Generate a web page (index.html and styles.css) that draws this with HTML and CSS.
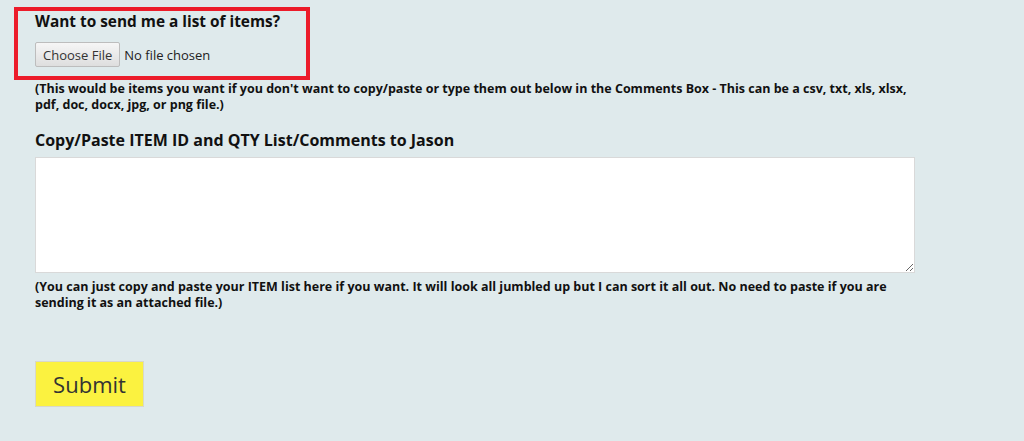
FILE: index.html
```html
<!DOCTYPE html>
<html lang="en">
<head>
<meta charset="utf-8">
<title>Send list</title>
<link rel="stylesheet" href="styles.css">
</head>
<body>
<form class="form">
  <div class="upload">
    <h3 class="label">Want to send me a list of items?</h3>
    <input class="file" type="file" name="list">
    <span class="highlight" aria-hidden="true"></span>
  </div>
  <p class="note">(This would be items you want if you don't want to copy/paste or type them out below in the Comments Box - This can be a csv, txt, xls, xlsx, pdf, doc, docx, jpg, or png file.)</p>
  <h3 class="label label-lg">Copy/Paste ITEM ID and QTY List/Comments to Jason</h3>
  <textarea class="comments" name="comments"></textarea>
  <p class="note">(You can just copy and paste your ITEM list here if you want. It will look all jumbled up but I can sort it all out. No need to paste if you are sending it as an attached file.)</p>
  <button class="submit" type="button">Submit</button>
</form>
</body>
</html>
```
FILE: styles.css
```css
html, body {
  margin: 0;
  padding: 0;
  background: #dfeaec;
}
body {
  font-family: "Open Sans", "DejaVu Sans", sans-serif;
  color: #111;
}
.form {
  width: 880px;
  padding: 13px 0 0 35px;
  display: flex;
  flex-direction: column;
  align-items: flex-start;
}
.upload {
  position: relative;
}
.label {
  margin: 0;
  font-size: 15.4px;
  line-height: 18px;
  font-weight: 700;
}
.label-lg {
  font-size: 16px;
  line-height: 20px;
  margin-top: 17px;
}
.file {
  display: block;
  margin-top: 11px;
  font-family: inherit;
  font-size: 13px;
  color: #222;
}
.file::file-selector-button {
  font-family: inherit;
  font-size: 13px;
  color: #333;
  height: 25px;
  padding: 0 7px;
  margin-right: 4px;
  border: 1px solid #bdbdbd;
  border-radius: 2px;
  background: linear-gradient(#f6f6f6, #dedede);
}
.highlight {
  position: absolute;
  left: -21px;
  top: -6px;
  width: 288px;
  height: 65px;
  border: 4px solid #ec1c2a;
  pointer-events: none;
}
.note {
  margin: 14px 0 0;
  font-size: 12.5px;
  line-height: 16px;
  font-weight: 700;
}
.comments {
  margin-top: 7px;
  width: 880px;
  height: 116px;
  box-sizing: border-box;
  border: 1px solid #d9d9d9;
  background: #fff;
  resize: vertical;
}
.comments + .note {
  margin-top: 6px;
}
.submit {
  margin-top: 50px;
  width: 109px;
  height: 46px;
  background: #fbf240;
  border: 1px solid #d8d8c8;
  font-family: inherit;
  font-size: 22px;
  color: #333;
  padding: 0;
}
```
